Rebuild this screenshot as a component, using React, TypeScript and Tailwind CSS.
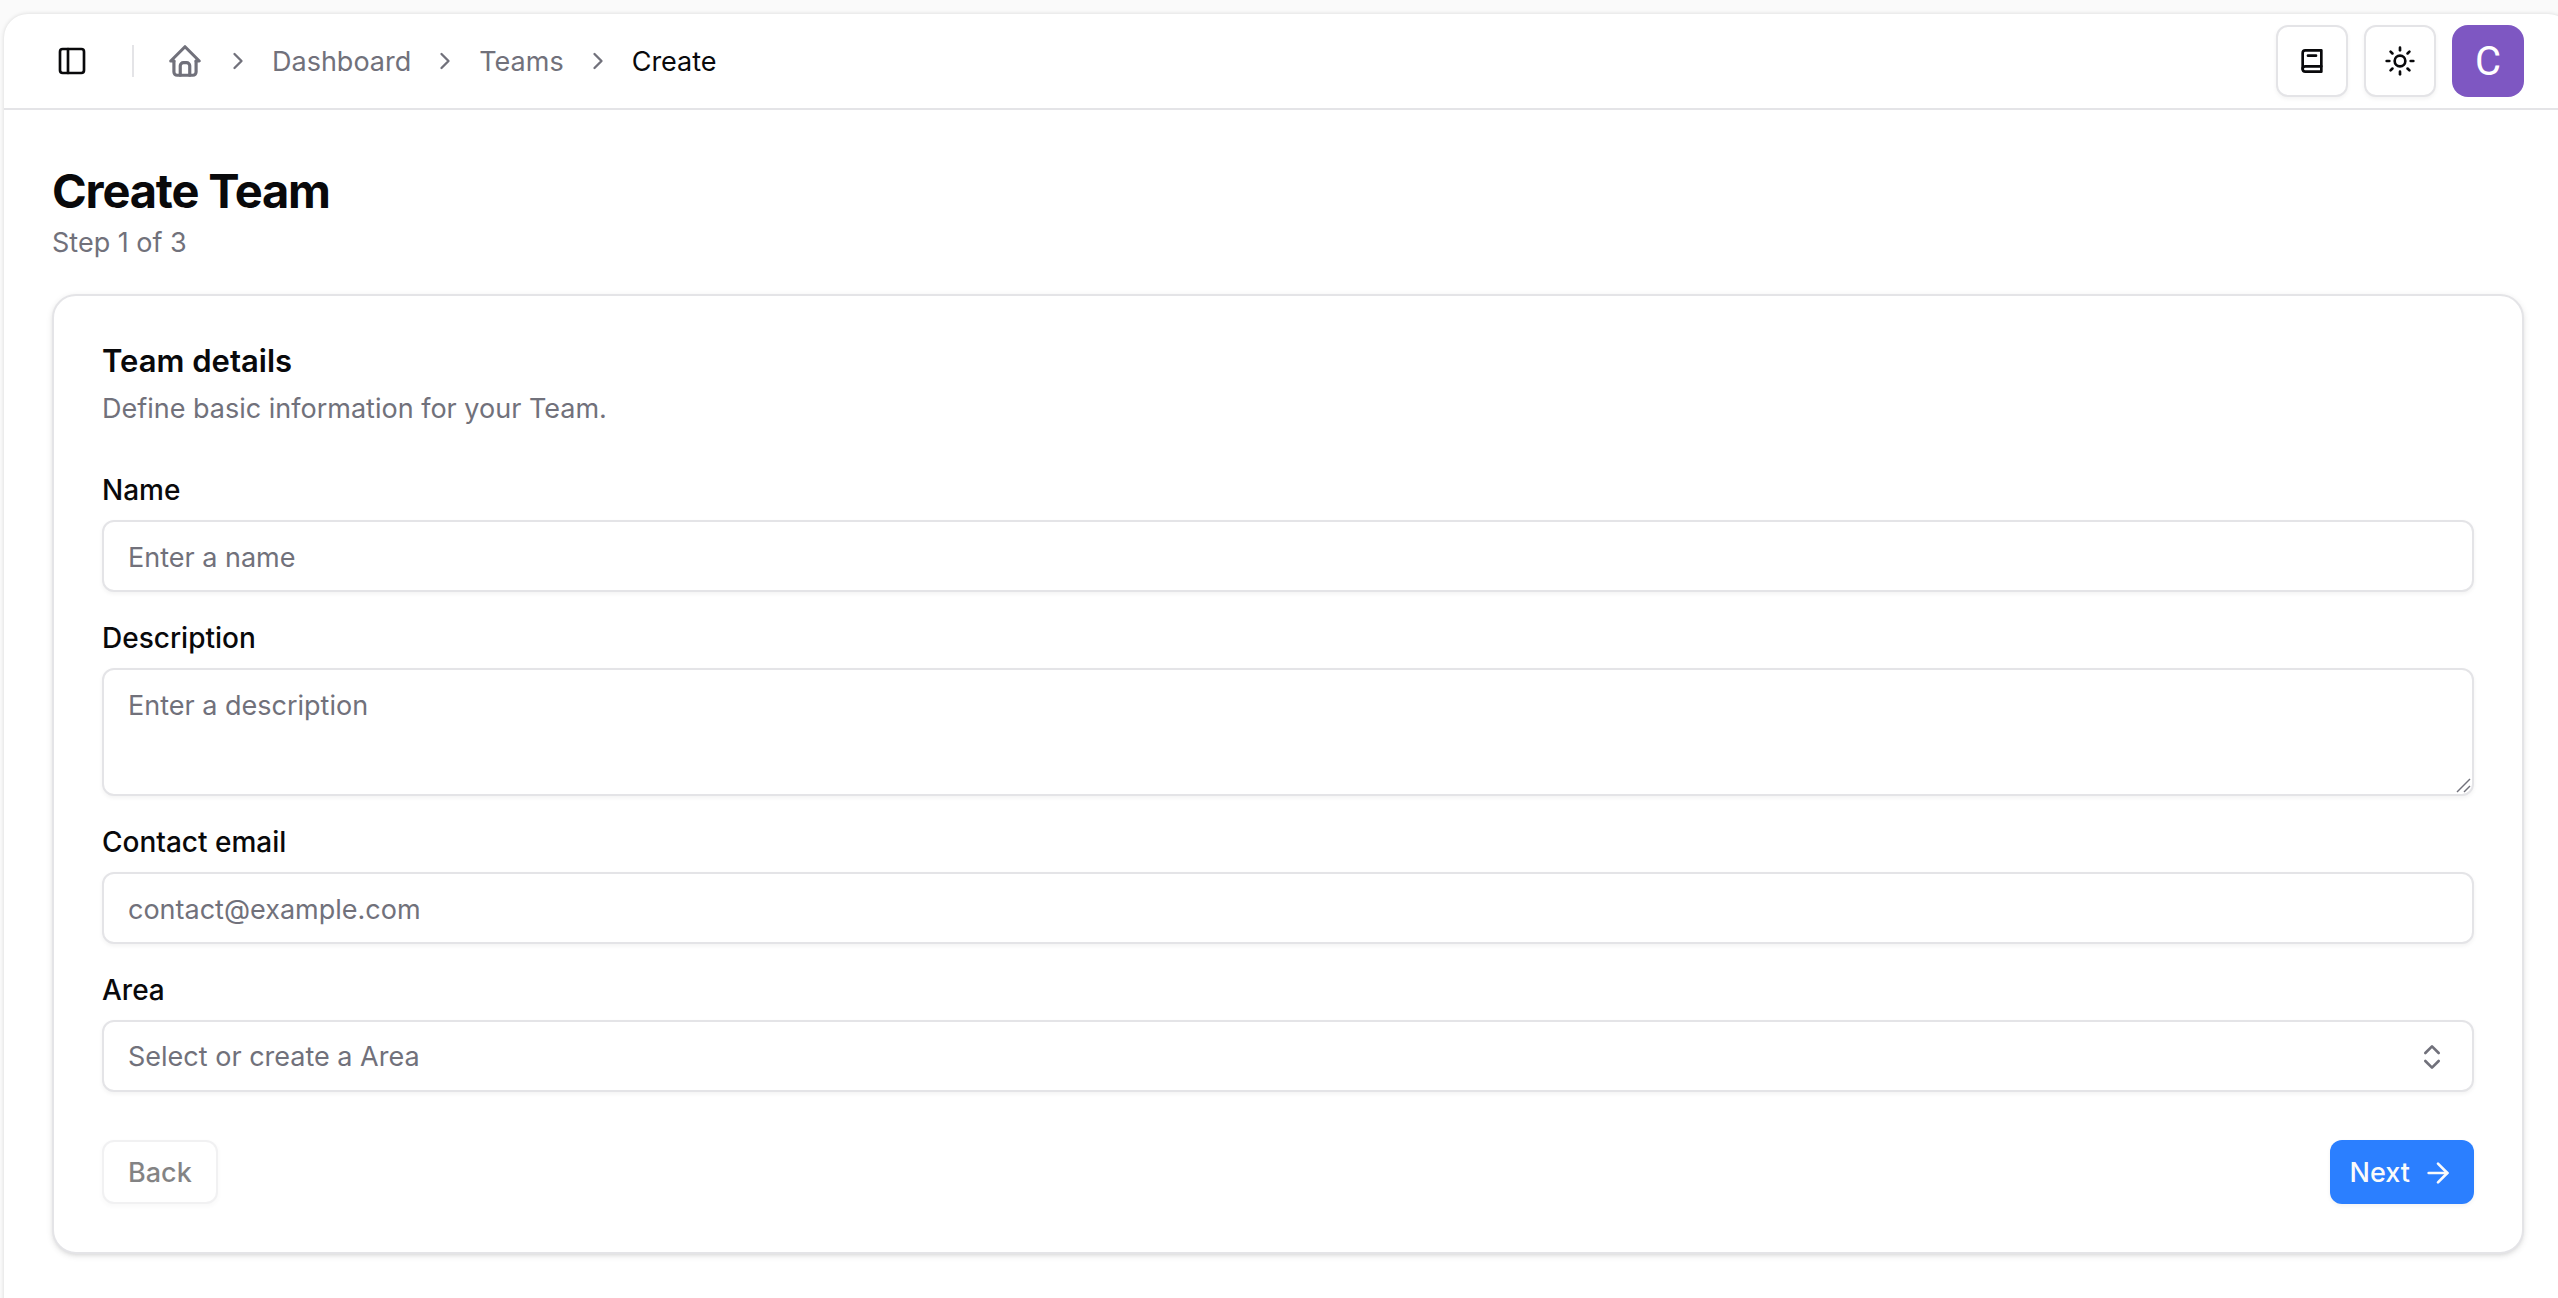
import { ArrowRight, ChevronRight, ChevronsUpDown, PanelLeft, Sun } from "lucide-react";
import type { ReactNode } from "react";

function HomeIcon() {
  return (
    <svg viewBox="0 0 24 24" className="size-[38px]" fill="none" stroke="currentColor" strokeWidth="2" strokeLinecap="round" strokeLinejoin="round" aria-hidden="true">
      <path d="M5 12H3l9-9 9 9h-2" />
      <path d="M5 12v7a2 2 0 0 0 2 2h10a2 2 0 0 0 2-2v-7" />
      <path d="M9 21v-6a2 2 0 0 1 2-2h2a2 2 0 0 1 2 2v6" />
    </svg>
  );
}

function BookIcon() {
  return (
    <svg viewBox="0 0 24 24" className="size-8" fill="none" stroke="currentColor" strokeWidth="2" strokeLinecap="round" strokeLinejoin="round" aria-hidden="true">
      <path d="M19 4v16H7a2 2 0 0 1-2-2V6a2 2 0 0 1 2-2h12z" />
      <path d="M19 16H7a2 2 0 0 0-2 2" />
      <path d="M9 8h6" />
    </svg>
  );
}

function ResizeGrip() {
  return (
    <svg viewBox="0 0 16 16" className="pointer-events-none absolute right-0.5 bottom-0.5 size-4 text-zinc-500" fill="none" stroke="currentColor" strokeWidth="1.5" aria-hidden="true">
      <path d="M1 14 14 1" />
      <path d="M8 14 14 8" />
    </svg>
  );
}

function Separator() {
  return (
    <li aria-hidden="true">
      <ChevronRight className="size-7" />
    </li>
  );
}

function IconButton({ label, children }: { label: string; children: ReactNode }) {
  return (
    <button
      type="button"
      aria-label={label}
      className="flex size-18 items-center justify-center rounded-xl border-2 border-zinc-200 bg-white shadow-[0_2px_4px_rgba(0,0,0,0.05)]"
    >
      {children}
    </button>
  );
}

function Field({ id, label, children }: { id: string; label: string; children: ReactNode }) {
  return (
    <div className="flex flex-col gap-4">
      <label htmlFor={id} className="text-[28px] leading-7 font-medium">
        {label}
      </label>
      {children}
    </div>
  );
}

const control =
  "block w-full rounded-xl border-2 border-zinc-200 bg-white px-6 text-[27px] leading-10 shadow-[0_2px_4px_rgba(0,0,0,0.05)] placeholder:text-zinc-500";

export default function App() {
  return (
    <div className="min-h-screen overflow-hidden bg-[#fafafa] pt-3.5 pl-1 font-[Inter,sans-serif] text-zinc-950">
      <div className="-mr-3.5 min-h-[calc(100vh-14px)] rounded-t-3xl bg-white shadow-[0_0_4px_rgba(0,0,0,0.14)]">
        <header className="flex h-24 items-center justify-between border-b-2 border-zinc-200 px-12">
          <div className="flex items-center">
            <button type="button" aria-label="Toggle sidebar" className="flex items-center p-1">
              <PanelLeft className="size-8" />
            </button>
            <div className="mr-8 ml-10 h-8 w-0.5 bg-zinc-200" />
            <nav aria-label="Breadcrumb">
              <ol className="flex items-center gap-5 text-[27px] leading-10 text-zinc-500">
                <li>
                  <a href="#home" aria-label="Home">
                    <HomeIcon />
                  </a>
                </li>
                <Separator />
                <li className="pt-0.5">
                  <a href="#dashboard">Dashboard</a>
                </li>
                <Separator />
                <li className="pt-0.5">
                  <a href="#teams">Teams</a>
                </li>
                <Separator />
                <li aria-current="page" className="pt-0.5 text-zinc-950">
                  Create
                </li>
              </ol>
            </nav>
          </div>
          <div className="flex gap-4">
            <IconButton label="Documentation">
              <BookIcon />
            </IconButton>
            <IconButton label="Toggle theme">
              <Sun className="size-8" />
            </IconButton>
            <button type="button" aria-label="Account" className="flex size-18 items-center justify-center rounded-2xl bg-[#7e57c2] pt-0.5 font-[Roboto,sans-serif] text-[40px] leading-none text-white">
              C
            </button>
          </div>
        </header>

        <main className="flex flex-col gap-8 p-12">
          <div>
            <h1 className="text-[47px] leading-[66px] font-bold tracking-tight">Create Team</h1>
            <p className="text-[27px] leading-[38px] text-zinc-500">Step 1 of 3</p>
          </div>

          <form className="flex flex-col gap-12 rounded-3xl border-2 border-zinc-200 bg-white p-12 shadow-[0_2px_6px_rgba(0,0,0,0.1),0_2px_4px_-2px_rgba(0,0,0,0.1)]">
            <div className="flex flex-col gap-3">
              <h2 className="text-[31px] leading-[34px] font-semibold">Team details</h2>
              <p className="text-[27px] leading-[38px] text-zinc-500">Define basic information for your Team.</p>
            </div>
            <div className="flex flex-col gap-8">
              <Field id="name" label="Name">
                <input id="name" type="text" placeholder="Enter a name" className={`${control} h-18 pt-0.5`} />
              </Field>
              <Field id="description" label="Description">
                <div className="relative">
                  <textarea id="description" placeholder="Enter a description" className={`${control} h-32 resize-y py-4 [&::-webkit-resizer]:hidden`} />
                  <ResizeGrip />
                </div>
              </Field>
              <Field id="email" label="Contact email">
                <input id="email" type="email" placeholder="contact@example.com" className={`${control} h-18 pt-0.5`} />
              </Field>
              <Field id="area" label="Area">
                <button id="area" type="button" role="combobox" aria-expanded="false" aria-controls="area-options" className={`${control} h-18 pt-0.5`}>
                  <span className="flex items-center justify-between text-zinc-500">
                    Select or create a Area
                    <ChevronsUpDown className="size-8" />
                  </span>
                </button>
              </Field>
            </div>
            <div className="flex items-center justify-between">
              <button type="button" disabled className="h-16 rounded-xl border-2 border-zinc-200 bg-white px-6 pt-0.5 text-[27px] leading-10 font-medium opacity-50 shadow-[0_2px_4px_rgba(0,0,0,0.05)]">
                Back
              </button>
              <button type="submit" className="flex h-16 items-center gap-3 rounded-xl bg-[#2b7fff] px-5 pt-0.5 text-[27px] leading-10 font-medium text-zinc-50 shadow-[0_2px_4px_rgba(0,0,0,0.05)]">
                Next
                <ArrowRight className="size-8" />
              </button>
            </div>
          </form>
        </main>
      </div>
    </div>
  );
}
